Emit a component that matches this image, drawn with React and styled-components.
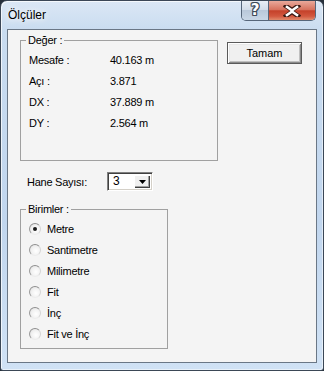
import styled, { createGlobalStyle } from "styled-components";

const GlobalStyle = createGlobalStyle`
  * { box-sizing: border-box; }
  body {
    margin: 0;
    background: #27303b;
    font-family: "Liberation Sans", Arial, sans-serif;
  }
`;

const olcumler = [
  ["Mesafe :", "40.163 m"],
  ["Açı :", "3.871"],
  ["DX :", "37.889 m"],
  ["DY :", "2.564 m"],
];

const birimler = ["Metre", "Santimetre", "Milimetre", "Fit", "İnç", "Fit ve İnç"];

export default function App() {
  return (
    <>
      <GlobalStyle />
      <Window>
        <TitleBar>
          <Title>Ölçüler</Title>
          <CaptionButtons>
            <HelpButton>?</HelpButton>
            <CloseButton>
              <svg width="18" height="12" viewBox="0 0 18 12">
                <path d="M3 1 L9 5 L15 1 M3 11 L9 7 L15 11" stroke="#3a1a14" strokeWidth="4.5" fill="none" strokeLinecap="square" />
                <path d="M4 2 L9 5.5 L14 2 M4 10 L9 6.5 L14 10" stroke="#ffffff" strokeWidth="2.6" fill="none" strokeLinecap="square" />
              </svg>
            </CloseButton>
          </CaptionButtons>
        </TitleBar>
        <Client>
          <TopRow>
            <Group $w={198} $h={127}>
              <legend>Değer :</legend>
              <ValueGrid>
                {olcumler.map(([k, v]) => (
                  <Pair key={k}>
                    <span>{k}</span>
                    <span>{v}</span>
                  </Pair>
                ))}
              </ValueGrid>
            </Group>
            <PushButton>Tamam</PushButton>
          </TopRow>
          <HaneRow>
            <Label>Hane Sayısı:</Label>
            <Combo>
              <ComboText>3</ComboText>
              <ComboArrow>
                <svg width="7" height="4" viewBox="0 0 7 4">
                  <path d="M0 0 H7 L3.5 4 Z" fill="#000" />
                </svg>
              </ComboArrow>
            </Combo>
          </HaneRow>
          <Group $w={148} $h={146}>
            <legend>Birimler :</legend>
            <RadioList>
              {birimler.map((b, i) => (
                <Option key={b}>
                  <Radio $checked={i === 0} />
                  <span>{b}</span>
                </Option>
              ))}
            </RadioList>
          </Group>
        </Client>
      </Window>
    </>
  );
}

function Pair({ children }) {
  return <>{children}</>;
}

const Window = styled.div`
  width: 324px;
  height: 371px;
  display: flex;
  flex-direction: column;
  border: 1px solid #3b4756;
  border-radius: 7px 7px 3px 3px;
  background: linear-gradient(to bottom, #dbe7f5 0%, #c9dcf0 30px, #c1d6ee 60%, #d0e2f5 100%);
  box-shadow: inset 1px 1px 0 rgba(255, 255, 255, 0.7), inset -1px -1px 0 rgba(255, 255, 255, 0.5);
  padding: 0 6px 7px 6px;
`;

const TitleBar = styled.div`
  height: 28px;
  display: flex;
  justify-content: space-between;
  align-items: flex-start;
`;

const Title = styled.div`
  font-size: 12px;
  color: #000;
  padding: 7px 0 0 1px;
  text-shadow: 0 0 6px #fff, 0 0 10px #fff;
`;

const CaptionButtons = styled.div`
  display: flex;
  border: 1px solid #56667a;
  border-top: none;
  border-radius: 0 0 5px 5px;
  overflow: hidden;
  margin-right: 1px;
`;

const HelpButton = styled.div`
  width: 27px;
  height: 19px;
  display: flex;
  align-items: center;
  justify-content: center;
  border-right: 1px solid #56667a;
  background: linear-gradient(to bottom, #e8eef5 0%, #d3dde9 45%, #b9c8da 50%, #c9d7e6 100%);
  color: #fff;
  font: bold 15px "DejaVu Sans", sans-serif;
  line-height: 15px;
  text-shadow: -1px 0 #3f4b59, 1px 0 #3f4b59, 0 -1px #3f4b59, 0 1px #3f4b59,
    -1px -1px #3f4b59, 1px 1px #3f4b59, 1px -1px #3f4b59, -1px 1px #3f4b59;
`;

const CloseButton = styled.div`
  width: 46px;
  height: 19px;
  display: flex;
  align-items: center;
  justify-content: center;
  background: linear-gradient(to bottom, #e9a99b 0%, #d7735f 45%, #c5412a 52%, #d2583f 80%, #e08a6c 100%);
`;

const Client = styled.div`
  flex: 1;
  border: 1px solid #6a7786;
  background: #f4f4f4;
  padding: 4px 14px 0 12px;
  display: flex;
  flex-direction: column;
  font-size: 11px;
  letter-spacing: -0.25px;
  color: #000;
`;

const TopRow = styled.div`
  display: flex;
  justify-content: space-between;
  align-items: flex-start;
`;

const Group = styled.fieldset`
  margin: 0;
  padding: 0;
  width: ${(p) => p.$w}px;
  height: ${(p) => p.$h}px;
  border: 1px solid #a0a0a0;
  min-width: 0;

  legend {
    margin-left: 5px;
    padding: 0 2px;
    font-size: 11px;
    line-height: 13px;
  }
`;

const ValueGrid = styled.div`
  display: grid;
  grid-template-columns: 81px auto;
  grid-auto-rows: 21px;
  align-items: center;
  padding: 2px 0 0 8px;
`;

const PushButton = styled.button`
  width: 75px;
  height: 22px;
  margin-top: 8px;
  padding: 0;
  font: 11px "Liberation Sans", Arial, sans-serif;
  color: #000;
  background: #f0f0f0;
  border: 1px solid #5a5a5a;
  box-shadow: inset 1px 1px 0 #ffffff, inset -1px -1px 0 #8a8a8a, inset 2px 2px 0 #e8e8e8, inset -2px -2px 0 #c0c0c0;
`;

const HaneRow = styled.div`
  display: flex;
  align-items: center;
  margin: 11px 0 12px 7px;
`;

const Label = styled.span`
  width: 80px;
`;

const Combo = styled.div`
  width: 46px;
  height: 19px;
  display: flex;
  align-items: stretch;
  background: #fff;
  border: 1px solid;
  border-color: #808080 #ffffff #ffffff #808080;
  box-shadow: inset 1px 1px 0 #404040, inset -1px -1px 0 #d4d0c8;
  padding: 2px;
`;

const ComboText = styled.span`
  flex: 1;
  padding-left: 3px;
  font-size: 12px;
  line-height: 13px;
`;

const ComboArrow = styled.span`
  width: 16px;
  display: flex;
  align-items: center;
  justify-content: center;
  background: #f0f0f0;
  box-shadow: inset 1px 1px 0 #ffffff, inset -1px -1px 0 #404040, inset -2px -2px 0 #a0a0a0;
`;

const RadioList = styled.div`
  display: flex;
  flex-direction: column;
  padding: 2px 0 0 8px;
`;

const Option = styled.div`
  height: 21px;
  display: flex;
  align-items: center;
  gap: 6px;
`;

const Radio = styled.span`
  width: 12px;
  height: 12px;
  border-radius: 50%;
  border: 1px solid;
  border-color: #8e8e8e #d6d6d6 #ececec #9a9a9a;
  background: radial-gradient(circle at 60% 60%, #ffffff 0%, #f2f2f2 50%, #dadada 100%);
  display: flex;
  align-items: center;
  justify-content: center;

  &::after {
    content: "";
    width: 4px;
    height: 4px;
    border-radius: 50%;
    background: #1a1a1a;
    display: ${(p) => (p.$checked ? "block" : "none")};
  }
`;
